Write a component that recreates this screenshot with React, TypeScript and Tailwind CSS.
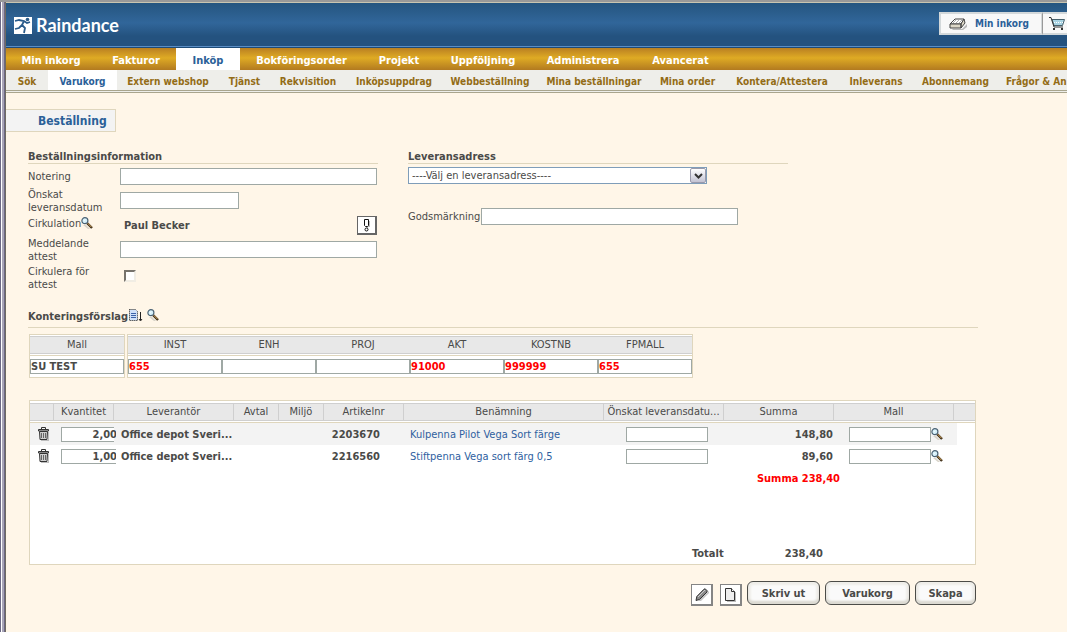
import clsx from "clsx";
import React from "react";

const mainTabs = [
  { label: "Min inkorg", width: "w-[90px]" },
  { label: "Fakturor", width: "w-20" },
  { label: "Inköp", width: "w-16", active: true },
  { label: "Bokföringsorder", width: "w-[123px]" },
  { label: "Projekt", width: "w-[72px]" },
  { label: "Uppföljning", width: "w-24" },
  { label: "Administrera", width: "w-26" },
  { label: "Avancerat", width: "w-[91px]" },
];

const subTabs = [
  { label: "Sök", width: "w-[42px]" },
  { label: "Varukorg", width: "w-[69px]", active: true },
  { label: "Extern webshop", width: "w-[102px]" },
  { label: "Tjänst", width: "w-[51px]" },
  { label: "Rekvisition", width: "w-[76px]" },
  { label: "Inköpsuppdrag", width: "w-24" },
  { label: "Webbeställning", width: "w-24" },
  { label: "Mina beställningar", width: "w-[112px]" },
  { label: "Mina order", width: "w-[75px]" },
  { label: "Kontera/Attestera", width: "w-[114px]" },
  { label: "Inleverans", width: "w-[74px]" },
  { label: "Abonnemang", width: "w-[85px]" },
  { label: "Frågor & An", width: "pl-2" },
];

const accounts = [
  { name: "INST", value: "655" },
  { name: "ENH", value: "" },
  { name: "PROJ", value: "" },
  { name: "AKT", value: "91000" },
  { name: "KOSTNB", value: "999999" },
  { name: "FPMALL", value: "655" },
];

const orderColumns = [
  { label: "", width: "w-6" },
  { label: "Kvantitet", width: "w-[60px]" },
  { label: "Leverantör", width: "w-[120px]" },
  { label: "Avtal", width: "w-[45px]" },
  { label: "Miljö", width: "w-[45px]" },
  { label: "Artikelnr", width: "w-20" },
  { label: "Benämning", width: "w-auto" },
  { label: "Önskat leveransdatu...", width: "w-[120px]" },
  { label: "Summa", width: "w-[110px]" },
  { label: "Mall", width: "w-[120px]" },
  { label: "", width: "w-[21px]" },
];

const orderRows = [
  {
    quantity: "2,00",
    supplier: "Office depot Sveri...",
    article: "2203670",
    name: "Kulpenna Pilot Vega Sort färge",
    sum: "148,80",
  },
  {
    quantity: "1,00",
    supplier: "Office depot Sveri...",
    article: "2216560",
    name: "Stiftpenna Vega sort färg 0,5",
    sum: "89,60",
  },
];

const inputStyle = "block border border-[#9fa8a4] bg-white outline-none";

function MagnifierIcon() {
  return (
    <svg width="12" height="12" viewBox="0 0 12 12" className="block">
      <path d="M2 8h3l4 4H7z" fill="#d8d3c8" />
      <path d="M6 6l5 5" stroke="#3b2c18" strokeWidth="2.4" />
      <path d="M6.6 6.2l4 4" stroke="#dfae62" strokeWidth="1" />
      <circle cx="3.9" cy="3.7" r="3" fill="#d5f1fb" stroke="#4b6274" strokeWidth="1.2" />
      <path d="M2.6 4.2l1.6-1.7" stroke="#fff" />
    </svg>
  );
}

function TrashIcon() {
  return (
    <svg width="12" height="14" viewBox="0 0 12 14" className="block">
      <path d="M3 13h7V5h1v9H3z" fill="#bdbdbd" />
      <path d="M3.500 2V.5h4V2" fill="none" stroke="#333" />
      <path d="M.5 2.500h10v1.500H.5z" fill="#ddd" stroke="#333" />
      <path d="M1.500 4.500h8l-.5 8H2z" fill="#d0d0d0" stroke="#333" />
      <path d="M3.500 6v5M5.500 6v5M7.500 6v5" stroke="#666" />
    </svg>
  );
}

function Header() {
  return (
    <header className="flex h-[45px] items-start justify-between overflow-hidden border-b border-[#1d4b78] bg-[linear-gradient(#25557f,#31669a_45%,#24527f_75%,#24527f)] shadow-[inset_0_-1px_0_#5b8dc4]">
      <a href="#" className="flex items-center gap-1 pt-3 pl-2 text-white">
        <svg width="18" height="18" viewBox="0 0 18 18">
          <path d="M0 1h18v17H0z" fill="#fff" />
          <circle cx="13.500" cy="3.500" r="1.800" fill="#2a5b8b" />
          <path
            d="M1 5l4-1 5 1 3 2 3-1M10 5L8 9l3 3-1 5M8 9l-3 3-4 1"
            fill="none"
            stroke="#2a5b8b"
            strokeWidth="1.800"
          />
        </svg>
        <span className="font-[Lato] text-lg leading-5 font-bold">Raindance</span>
      </a>
      <div className="-mr-[11px] mt-[9px] flex h-[23px] text-[10px] font-bold text-[#2a6098]">
        <button className="flex w-[103px] items-center gap-2 border-2 border-r border-[#d3d8da] bg-[#f8f8f8] pl-2">
          <svg width="18" height="12" viewBox="0 0 18 12">
            <path d="M3 11h10l5-5v3l-4 3H4z" fill="#b9b9b9" />
            <path d="M1 6l5-5h9l-3 5z" fill="#fff" stroke="#444" />
            <path d="M1 6h11v4H1zM12 6l3-5 1 4-4 5z" fill="#ddd8c8" stroke="#444" />
            <path d="M4 5l3-3M7 5l3-3M10 5l3-3" stroke="#aaa" />
          </svg>
          Min inkorg
        </button>
        <button
          aria-label="Varukorg"
          className="w-9 border-2 border-l border-[#d3d8da] border-l-[#999] bg-[#f8f8f8] pl-1.5"
        >
          <svg width="16" height="14" viewBox="0 0 16 14">
            <path d="M3 2.500h12.500l-2 6H5z" fill="#a9d3e2" stroke="#46606c" />
            <path d="M0 .5h2l3 9.500h9" fill="none" stroke="#333" />
            <path d="M5 5.500h9" stroke="#fff" strokeDasharray="1 1" />
            <path d="M4 11h2v2H4zM12 11h2v2h-2z" fill="#333" />
          </svg>
        </button>
      </div>
    </header>
  );
}

function Navigation() {
  return (
    <nav>
      <div className="flex h-[22px] overflow-hidden bg-[linear-gradient(#b97f22,#dfab24_45%,#b27a20)] text-center leading-[26px] font-bold text-white">
        {mainTabs.map((tab) => (
          <a
            key={tab.label}
            href="#"
            className={clsx("block shrink-0 whitespace-nowrap", tab.width, tab.active && "bg-white text-[#2a6098]")}
          >
            {tab.label}
          </a>
        ))}
      </div>
      <div className="flex h-[23px] overflow-hidden border-b-3 border-double border-[#a9a58e] bg-[#eeeeea] text-center text-[10px] leading-6 font-bold text-[#936c16]">
        {subTabs.map((tab) => (
          <a
            key={tab.label}
            href="#"
            className={clsx("block shrink-0 whitespace-nowrap", tab.width, tab.active && "bg-white text-[#2a6098]")}
          >
            {tab.label}
          </a>
        ))}
      </div>
    </nav>
  );
}

function OrderInformation() {
  return (
    <section className="w-[350px]">
      <h2 className="mb-0.5 border-b border-[#dfd6bd] leading-[13px] font-bold">Beställningsinformation</h2>
      <div className="flex h-[21px] items-center">
        <label htmlFor="note" className="w-[92px]">Notering</label>
        <input id="note" className={clsx(inputStyle, "h-[17px] w-[257px]")} />
      </div>
      <div className="flex h-7 items-start">
        <label htmlFor="date" className="w-[92px] pt-px pr-4">Önskat leveransdatum</label>
        <input id="date" className={clsx(inputStyle, "mt-[5px] h-[17px] w-[119px]")} />
      </div>
      <div className="flex h-[21px] items-center">
        <div className="flex w-24 self-start pt-0.5">
          Cirkulation
          <button aria-label="Sök cirkulation" className="self-start"><MagnifierIcon /></button>
        </div>
        <span className="grow font-bold">Paul Becker</span>
        <button
          aria-label="Viktigt"
          className="mr-px flex h-[19px] w-5 items-center justify-center border border-r-2 border-b-2 border-[#666] bg-white"
        >
          <svg width="8" height="13" viewBox="0 0 8 13">
            <path d="M4 2h3v6H5v4H3z" fill="#bbb" />
            <path d="M1.500 .5h4v6l-1 1h-2l-1-1z" fill="#fff" stroke="#111" />
            <circle cx="3.500" cy="10.500" r="1.500" fill="#fff" stroke="#111" />
          </svg>
        </button>
      </div>
      <div className="flex h-7 items-start">
        <label htmlFor="message" className="w-[92px] pt-px pr-4">Meddelande attest</label>
        <input id="message" className={clsx(inputStyle, "mt-[5px] h-[17px] w-[257px]")} />
      </div>
      <div className="flex h-7 items-start">
        <label htmlFor="circulate" className="w-24 pt-px pr-6">Cirkulera för attest</label>
        <input
          id="circulate"
          type="checkbox"
          className="mt-1.5 size-3 appearance-none border-2 border-[#f1ede4] border-t-[#77736c] border-l-[#77736c] bg-white"
        />
      </div>
    </section>
  );
}

function DeliveryAddress() {
  return (
    <section className="w-[380px]">
      <h2 className="mb-0.5 border-b border-[#dfd6bd] leading-[13px] font-bold">Leveransadress</h2>
      <div className="relative mt-[3px] w-[299px]">
        <select
          aria-label="Leveransadress"
          className="block h-[17px] w-full appearance-none border border-[#7f9db9] bg-white pl-[3px] leading-[15px] outline-none"
        >
          <option>----Välj en leveransadress----</option>
        </select>
        <span className="pointer-events-none absolute top-px right-px flex h-[15px] w-4 items-center justify-center rounded-xs border border-[#9a9aac] bg-linear-to-b from-white to-[#c3c3d3]">
          <svg width="9" height="6" viewBox="0 0 9 6">
            <path d="M1 1l3.500 3.500L8 1" fill="none" stroke="#333" strokeWidth="2" />
          </svg>
        </span>
      </div>
      <div className="mt-6 flex items-center gap-px">
        <label htmlFor="goods">Godsmärkning</label>
        <input id="goods" className={clsx(inputStyle, "h-[17px] w-[257px]")} />
      </div>
    </section>
  );
}

function AccountingTables() {
  const headCell = "h-[18px] border-y border-[#cfcfcf] bg-[#e8e8e8] p-0 text-center leading-4 font-normal";
  return (
    <div className="flex items-start gap-0.5">
      <div className="w-24 border border-[#dfd6bd] bg-white pt-px">
        <div className={headCell}>
          <label htmlFor="template">Mall</label>
        </div>
        <div className="mt-px border-t border-[#dfd6bd] py-[3px]">
          <input id="template" defaultValue="SU TEST" className={clsx(inputStyle, "h-[15px] w-full font-bold")} />
        </div>
      </div>
      <div className="w-[566px] border border-[#dfd6bd] bg-white pt-px">
        <table className="w-full table-fixed border-separate border-spacing-0">
          <thead>
            <tr>
              {accounts.map((account) => (
                <th key={account.name} className={headCell}>{account.name}</th>
              ))}
            </tr>
          </thead>
          <tbody>
            <tr>
              {accounts.map((account) => (
                <td key={account.name} className="p-0">
                  <div className="mt-px border-t border-[#dfd6bd] py-[3px]">
                    <input
                      aria-label={account.name}
                      defaultValue={account.value}
                      className={clsx(inputStyle, "h-[15px] w-full font-bold text-[#f00]")}
                    />
                  </div>
                </td>
              ))}
            </tr>
          </tbody>
        </table>
      </div>
    </div>
  );
}

function OrderTable() {
  return (
    <div className="max-w-[947px] border border-[#dfd6bd] bg-white">
      <table className="w-full table-fixed border-separate border-spacing-0">
        <thead>
          <tr>
            {orderColumns.map((column, index) => (
              <th
                key={index}
                className={clsx(
                  "h-[22px] border-b border-[#dfd6bd] p-0 font-normal whitespace-nowrap",
                  column.width,
                )}
              >
                <div
                  className={clsx(
                    "my-px h-[18px] border-y border-[#cfcfcf] bg-[#e8e8e8] leading-4",
                    index < orderColumns.length - 1 && "border-r",
                  )}
                >
                  {column.label}
                </div>
              </th>
            ))}
          </tr>
        </thead>
        <tbody>
          {orderRows.map((row, index) => (
            <tr key={row.article} className="h-[22px] *:p-0 first:*:bg-[#f3f3f3]">
              <td>
                <button aria-label="Ta bort" className="block pl-2"><TrashIcon /></button>
              </td>
              <td>
                <div className="ml-[7px] w-[55px] overflow-hidden">
                  <input
                    aria-label="Kvantitet"
                    defaultValue={row.quantity}
                    className={clsx(inputStyle, "h-[15px] w-[57px] text-right font-bold")}
                  />
                </div>
              </td>
              <td className="font-bold whitespace-nowrap"><span className="pl-[7px]">{row.supplier}</span></td>
              <td />
              <td />
              <td className="text-right font-bold"><span className="pr-6">{row.article}</span></td>
              <td><a href="#" className="pl-1.5 text-[#2f5f9f]">{row.name}</a></td>
              <td>
                <input
                  aria-label="Önskat leveransdatum"
                  className={clsx(inputStyle, "ml-[22px] h-[15px] w-[82px]")}
                />
              </td>
              <td className="text-right font-bold"><span className="pr-px">{row.sum}</span></td>
              <td>
                <div className="flex pl-[15px]">
                  <input aria-label="Mall" className={clsx(inputStyle, "h-[15px] w-[82px]")} />
                  <button aria-label="Sök mall"><MagnifierIcon /></button>
                </div>
              </td>
              <td className={clsx(index === 0 && "border-r-[18px] border-white")} />
            </tr>
          ))}
          <tr className="h-[22px] font-bold text-[#f00]">
            <td colSpan={10} className="p-0 pr-[114px] text-right">Summa 238,40</td>
            <td />
          </tr>
        </tbody>
        <tfoot>
          <tr className="h-[75px] align-bottom font-bold *:p-0 *:pb-1">
            <td colSpan={7} />
            <td><span className="pl-[88px]">Totalt</span></td>
            <td className="text-right"><span className="pr-[11px]">238,40</span></td>
            <td colSpan={2} />
          </tr>
        </tfoot>
      </table>
    </div>
  );
}

function Actions() {
  const iconButton =
    "mt-[3px] flex size-[22px] items-center justify-center border border-r-2 border-b-2 border-[#858585] bg-white";
  const textButton =
    "h-6 rounded-md border border-[#4c4c48] bg-[#fafafa] font-bold shadow-[inset_0_-3px_2px_#dcdad2,inset_0_0_2px_3px_#efeee9]";
  return (
    <div className="mt-4 flex max-w-[947px] justify-end gap-[5px]">
      <button aria-label="Redigera" className={clsx(iconButton, "mr-0.5")}>
        <svg width="14" height="14" viewBox="0 0 14 14">
          <path d="M3 13h3l8-8V3z" fill="#c4c4c4" />
          <path d="M1 12.500l.8-4L9 1.200l1.200-.4 2 2-.2 1.200-7.400 7.400z" fill="#8a8a8a" stroke="#333" />
          <path d="M3 9l7-7" stroke="#ccc" />
        </svg>
      </button>
      <button aria-label="Nytt dokument" className={iconButton}>
        <svg width="13" height="14" viewBox="0 0 13 14">
          <path d="M3 13h8V4h1v10H3z" fill="#bbb" />
          <path d="M1.500 .5h6l3 3v9h-9z" fill="#eee" stroke="#333" />
          <path d="M7.500 .5v3h3" fill="#fff" stroke="#333" />
        </svg>
      </button>
      <button className={clsx(textButton, "w-[73px]")}>Skriv ut</button>
      <button className={clsx(textButton, "w-[85px]")}>Varukorg</button>
      <button className={clsx(textButton, "w-[61px]")}>Skapa</button>
    </div>
  );
}

export default function App() {
  return (
    <div className="flex min-h-screen overflow-hidden border-t-2 border-[#999] bg-[#fff6e8] font-['DejaVu_Sans_Condensed','DejaVu_Sans',sans-serif] text-[11px] leading-[13px] text-[#4a4a48]">
      <div className="flex shrink-0">
        <div className="w-px bg-[#6c6884]" />
        <div className="w-px bg-white" />
        <div className="w-0.5 bg-[#a9a5b8]" />
        <div className="w-px bg-[#6c6884]" />
        <div className="w-px bg-[#6f6b62]" />
      </div>
      <div className="min-w-0 grow border-t border-[#c9c5b0]">
        <Header />
        <Navigation />
        <main>
          <h1 className="mt-4 h-[23px] w-[110px] border border-l-0 border-[#dfd6bd] bg-[#f3f3f3] pl-8 text-xs leading-[22px] font-bold text-[#2a6098]">
            Beställning
          </h1>
          <div className="px-[22px]">
            <div className="mt-[18px] flex gap-[30px]">
              <OrderInformation />
              <DeliveryAddress />
            </div>
            <div className="mt-[17px] mb-1.5 flex h-[19px] max-w-[950px] items-start border-b border-[#dfd6bd]">
              <h2 className="pt-px font-bold">Konteringsförslag</h2>
              <button aria-label="Kopiera kontering">
                <svg width="15" height="14" viewBox="0 0 15 14" className="block">
                  <path d="M1.500 .5h6l2 2v9h-8z" fill="#cfe0f8" stroke="#222" strokeDasharray="1 1" />
                  <path d="M3 4.500h5M3 6.500h5M3 8.500h5" stroke="#3c62a8" />
                  <path d="M12.500 3v8M11 10l1.500 2L14 10" fill="none" stroke="#222" />
                </svg>
              </button>
              <button aria-label="Sök kontering" className="ml-1"><MagnifierIcon /></button>
            </div>
            <div className="flex flex-col gap-[22px] pl-px">
              <AccountingTables />
              <div>
                <OrderTable />
                <Actions />
              </div>
            </div>
          </div>
        </main>
      </div>
    </div>
  );
}
